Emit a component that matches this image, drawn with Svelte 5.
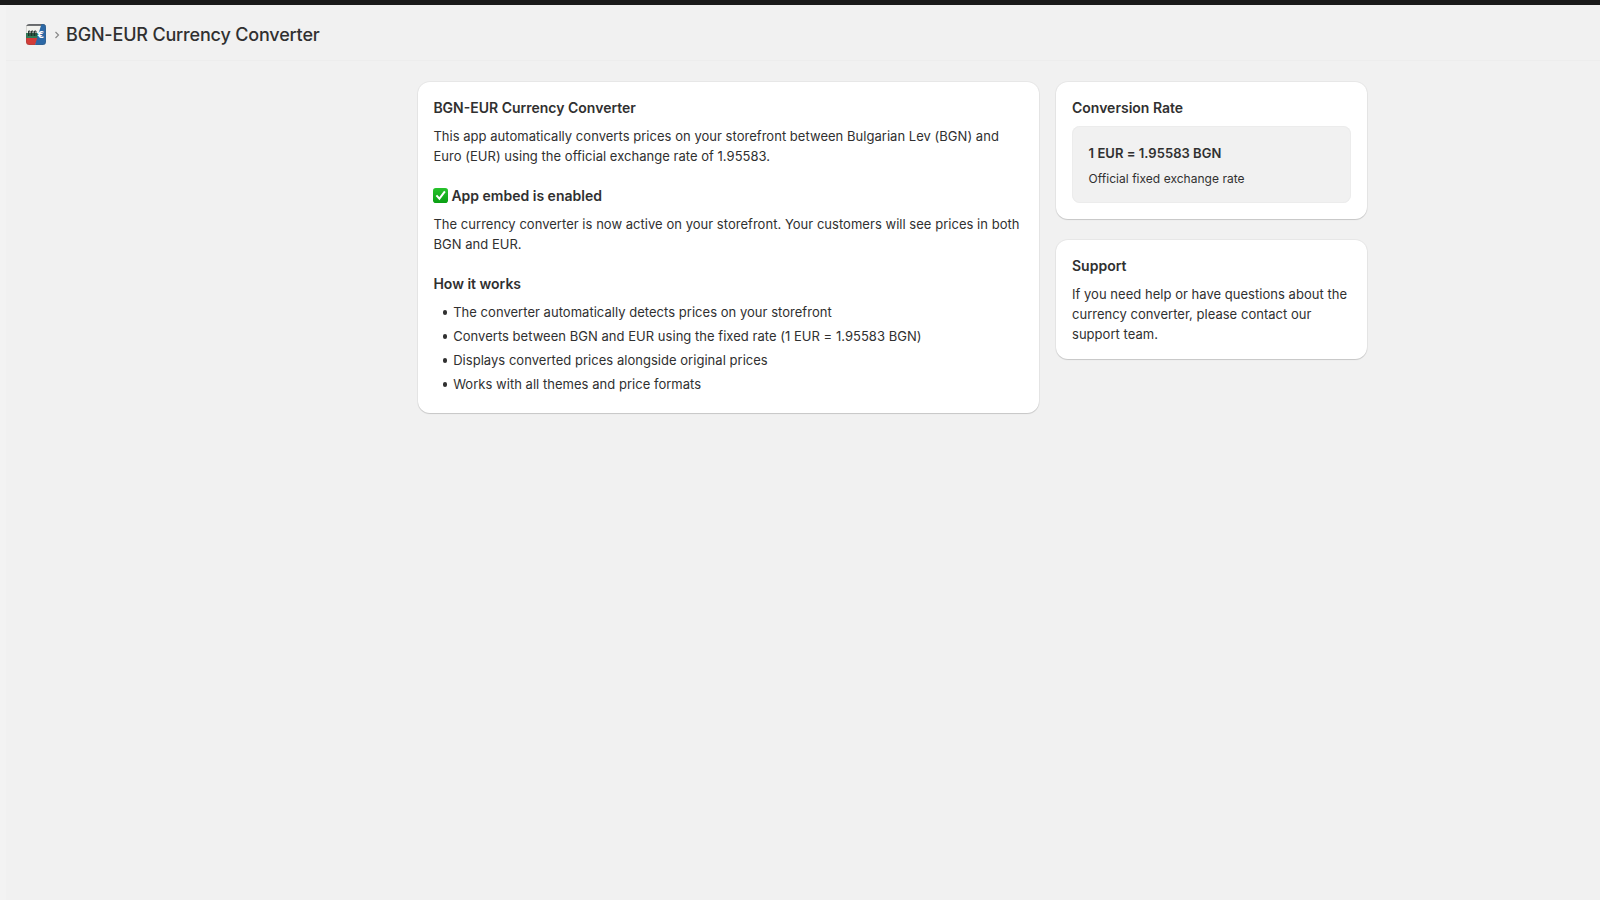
<script>
  const steps = [
    'The converter automatically detects prices on your storefront',
    'Converts between BGN and EUR using the fixed rate (1 EUR = 1.95583 BGN)',
    'Displays converted prices alongside original prices',
    'Works with all themes and price formats'
  ];
</script>

<div class="page">
  <div class="topbar"></div>
  <div class="shell">
    <div class="rail"></div>
    <div class="content">
      <header class="header">
        <svg class="logo" viewBox="0 0 20 21" width="20" height="21" aria-hidden="true">
          <defs><clipPath id="logo-clip"><rect width="20" height="21" rx="3.5" /></clipPath></defs>
          <g clip-path="url(#logo-clip)">
            <rect width="20" height="21" fill="#f2f2ee" />
            <rect width="20" height="2" fill="#6f7174" />
            <rect y="9" width="14" height="5" fill="#2f7b57" />
            <path d="M0 14h13L9 21H0z" fill="#d33c38" />
            <path d="M15.5 0H20v21H9z" fill="#2c68a6" />
            <path d="M2.5 12V7H4v5M5.5 12V7H7v5M8.5 12V7H10v5" stroke="#1d2a26" stroke-width="0.9" fill="none" />
            <text x="15" y="13.8" font-family="'DejaVu Sans', sans-serif" font-size="9" font-weight="700" fill="#fff" text-anchor="middle">€</text>
          </g>
          <rect x="0.25" y="0.25" width="19.5" height="20.5" rx="3.4" fill="none" stroke="#4a4a4a" stroke-opacity="0.45" stroke-width="0.5" />
        </svg>
        <svg class="chev" viewBox="0 0 8 10" width="8" height="10" aria-hidden="true">
          <path d="M2.5 2 5.5 5 2.5 8" fill="none" stroke="#8a8a8a" stroke-width="1.2" />
        </svg>
        <h1>BGN-EUR Currency Converter</h1>
      </header>
      <main class="main">
        <section class="card primary">
          <h2>BGN-EUR Currency Converter</h2>
          <p>This app automatically converts prices on your storefront between Bulgarian Lev (BGN) and Euro (EUR) using the official exchange rate of 1.95583.</p>
          <h2 class="status">
            <svg class="check" viewBox="0 0 15 15" width="15" height="15" aria-hidden="true">
              <defs>
                <linearGradient id="check-fill" x1="0" y1="0" x2="0" y2="1">
                  <stop offset="0" stop-color="#27c22c" />
                  <stop offset="1" stop-color="#0a9f14" />
                </linearGradient>
              </defs>
              <rect width="15" height="15" rx="2.8" fill="url(#check-fill)" />
              <path d="M3.4 7.4 6.4 10.6 11.9 3.4" fill="none" stroke="#fff" stroke-width="2" />
            </svg>
            App embed is enabled
          </h2>
          <p>The currency converter is now active on your storefront. Your customers will see prices in both BGN and EUR.</p>
          <h2 class="works">How it works</h2>
          <ul>
            {#each steps as step}
              <li><span class="dot"></span>{step}</li>
            {/each}
          </ul>
        </section>
        <aside class="side">
          <section class="card rate-card">
            <h2>Conversion Rate</h2>
            <div class="rate">
              <strong>1 EUR = 1.95583 BGN</strong>
              <span>Official fixed exchange rate</span>
            </div>
          </section>
          <section class="card support">
            <h2>Support</h2>
            <p>If you need help or have questions about the currency converter, please contact our support team.</p>
          </section>
        </aside>
      </main>
    </div>
  </div>
</div>

<style>
  :global(body) {
    margin: 0;
    background: #f1f1f1;
  }
  .page {
    height: 900px;
    overflow: hidden;
    font-family: Inter, "Liberation Sans", sans-serif;
    font-size: 13px;
    line-height: 20px;
    letter-spacing: 0.03px;
    color: #303030;
  }
  .topbar { height: 5px; background: #1a1a1a; }
  .shell { display: flex; height: 895px; }
  .rail { width: 6px; background: #f3f3f3; }
  .content { flex: 1; background: #f1f1f1; }
  .header {
    display: flex;
    align-items: center;
    height: 56px;
    padding: 4px 0 0 20px;
    box-sizing: border-box;
    border-bottom: 1px solid #ededed;
  }
  .chev { margin-left: 7px; margin-right: 5px; }
  h1 {
    margin: 0;
    font-size: 18px;
    font-weight: 500;
    line-height: 24px;
    letter-spacing: -0.18px;
    color: #303030;
  }
  .main {
    display: grid;
    grid-template-columns: 621px 310.6px;
    gap: 17.4px;
    align-items: start;
    padding: 21px 0 0 412px;
  }
  .side { display: flex; flex-direction: column; gap: 21px; }
  .card {
    background: #fff;
    border-radius: 12px;
    padding: 16px;
    box-shadow: 0 0 0 1px rgba(0,0,0,.04), 0 1px 1px rgba(0,0,0,.14);
  }
  .primary { padding: 16px 16px 19px 15.4px; }
  .rate-card { padding-left: 15.6px; }
  .support { padding: 16px 16px 15px 15.6px; }
  h2 {
    margin: 0 0 8px;
    font-size: 14px;
    font-weight: 600;
    line-height: 20px;
    letter-spacing: 0;
    color: #303030;
  }
  p { margin: 0; }
  .status, .works { margin-top: 20px; }
  .status { display: flex; align-items: center; gap: 3px; }
  .check { flex: none; margin-bottom: 2px; }
  ul { margin: 0; padding: 0 0 0 9.3px; list-style: none; }
  li { display: flex; align-items: center; gap: 6px; margin-bottom: 4px; }
  li:last-child { margin-bottom: 0; }
  .dot { flex: none; width: 4.5px; height: 4.5px; border-radius: 50%; background: #303030; margin-top: 1px; }
  .rate {
    display: flex;
    flex-direction: column;
    gap: 6px;
    background: #f1f1f1;
    border-radius: 8px;
    padding: 17px 16px 14px 16.6px;
    box-shadow: inset 0 0 0 1px #ececec;
  }
  .rate strong { font-size: 13px; font-weight: 600; }
  .rate span { font-size: 12px; line-height: 20px; }
</style>
